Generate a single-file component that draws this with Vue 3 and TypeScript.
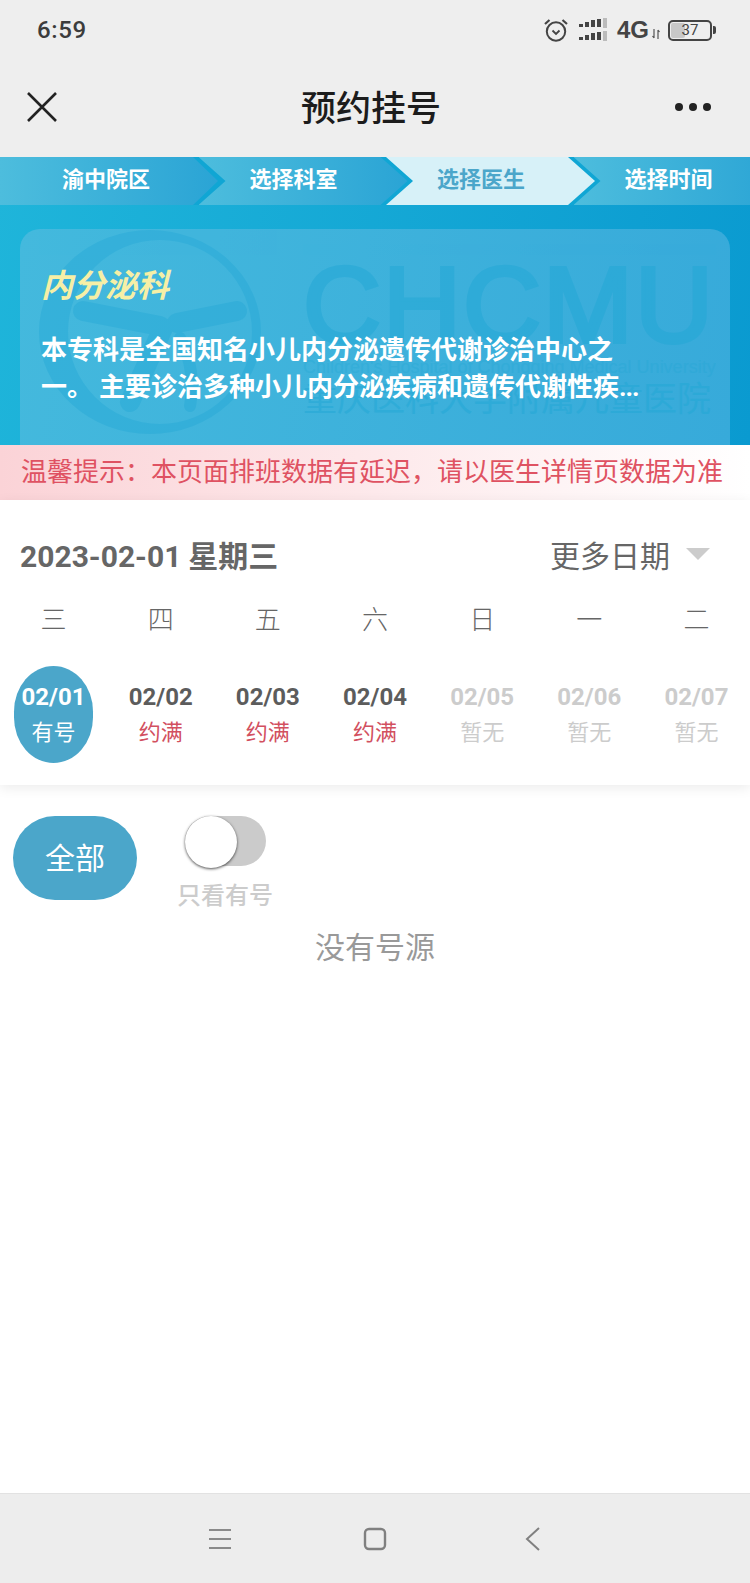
<script setup lang="ts">
interface Day { week: string; date: string; status: string; kind: 'active' | 'full' | 'none' }
const steps: string[] = ['渝中院区', '选择科室', '选择医生', '选择时间']
const days: Day[] = [
  { week: '三', date: '02/01', status: '有号', kind: 'active' },
  { week: '四', date: '02/02', status: '约满', kind: 'full' },
  { week: '五', date: '02/03', status: '约满', kind: 'full' },
  { week: '六', date: '02/04', status: '约满', kind: 'full' },
  { week: '日', date: '02/05', status: '暂无', kind: 'none' },
  { week: '一', date: '02/06', status: '暂无', kind: 'none' },
  { week: '二', date: '02/07', status: '暂无', kind: 'none' }
]
</script>

<template>
  <div class="page">
    <header class="top">
      <div class="status">
        <span class="time">6:59</span>
        <div class="status-right">
          <svg class="alarm" width="26" height="26" viewBox="0 0 26 26" fill="none" stroke="#444" stroke-width="2">
            <circle cx="13" cy="14.5" r="9.2" />
            <path d="M9.5 13.5l3.5 3.5 3.5-3.5" stroke-width="1.8" />
            <path d="M2 7l4.5-4M24 7l-4.5-4" stroke-width="2.2" />
          </svg>
          <svg class="signal" width="28" height="24" viewBox="0 0 28 24">
            <g fill="#444">
              <rect x="0" y="6" width="4" height="3" /><rect x="6" y="4" width="4" height="5" /><rect x="12" y="2" width="4" height="7" /><rect x="18" y="1" width="4" height="8" />
              <rect x="0" y="19" width="4" height="3" /><rect x="6" y="17" width="4" height="5" /><rect x="12" y="15" width="4" height="7" /><rect x="18" y="14" width="4" height="8" />
            </g>
            <rect x="24" y="0" width="4" height="10" fill="#bbb" />
            <rect x="24" y="13" width="4" height="10" fill="#bbb" />
          </svg>
          <span class="net">4G</span>
          <svg class="arrows" width="8" height="12" viewBox="0 0 8 12" fill="none" stroke="#555" stroke-width="1.2">
            <path d="M2 1v9M0.5 8l1.5 2M6 11V2M7.5 4L6 2" />
          </svg>
          <div class="battery"><span class="battery-fill"></span><span class="battery-num">37</span></div>
          <span class="battery-tip"></span>
        </div>
      </div>
      <div class="nav">
        <svg width="30" height="30" viewBox="0 0 30 30" fill="none" stroke="#222" stroke-width="2.6">
          <path d="M1 1l28 28M29 1L1 29" />
        </svg>
        <h1 class="title">预约挂号</h1>
        <div class="dots"><i></i><i></i><i></i></div>
      </div>
    </header>

    <section class="hero">
      <div class="steps">
        <div v-for="(s, i) in steps" :key="s" class="step" :class="{ first: i === 0, current: i === 2 }">{{ s }}</div>
      </div>
      <div class="card">
        <svg class="mark" width="250" height="216" viewBox="0 0 250 216" fill="none">
          <path fill="#24a8d6" fill-rule="evenodd" d="M130 0a111 102 0 1 0 0 204a111 102 0 1 0 0-204zM140 10a92 92 0 1 1 0 184a92 92 0 1 1 0-184z" />
          <g stroke="#24a8d6" stroke-width="20" stroke-linecap="round">
            <path d="M63 81L140 96M217 81L157 93M143 98L110 172" />
            <path d="M160 108C172 130 174 155 170 176" stroke-width="12" />
          </g>
        </svg>
        <div class="wm">
          <div class="wm-big">CHCMU</div>
          <div class="wm-en">Children's Hospital of Chongqing Medical University</div>
          <div class="wm-cn">重庆医科大学附属儿童医院</div>
        </div>
        <h2 class="dept">内分泌科</h2>
        <p class="desc">本专科是全国知名小儿内分泌遗传代谢诊治中心之</p>
        <p class="desc">一。 主要诊治多种小儿内分泌疾病和遗传代谢性疾<span class="ell">...</span></p>
      </div>
    </section>

    <div class="notice">温馨提示：本页面排班数据有延迟，请以医生详情页数据为准</div>

    <section class="calendar">
      <div class="cal-head">
        <span class="cur-date"><b class="digits">2023-02-01</b> 星期三</span>
        <span class="more">更多日期<i class="tri"></i></span>
      </div>
      <div class="weeks">
        <div v-for="d in days" :key="d.week" class="week">{{ d.week }}</div>
      </div>
      <div class="days">
        <div v-for="d in days" :key="d.date" class="day" :class="d.kind">
          <span class="d-date">{{ d.date }}</span>
          <span class="d-status">{{ d.status }}</span>
        </div>
      </div>
    </section>

    <main class="content">
      <div class="filter">
        <button class="all">全部</button>
        <div class="only">
          <div class="switch"><span class="knob"></span></div>
          <span class="only-label">只看有号</span>
        </div>
      </div>
      <p class="empty">没有号源</p>
    </main>

    <footer class="bottom">
      <svg width="24" height="22" viewBox="0 0 24 22" fill="none" stroke="#8a8a8a" stroke-width="2"><path d="M1 2h22M1 11h22M1 20h22" /></svg>
      <svg width="24" height="24" viewBox="0 0 24 24" fill="none" stroke="#808080" stroke-width="2.4"><rect x="2" y="2" width="20" height="20" rx="4" /></svg>
      <svg width="16" height="24" viewBox="0 0 16 24" fill="none" stroke="#808080" stroke-width="2"><path d="M14 1L2 12l12 11" /></svg>
    </footer>
  </div>
</template>

<style>
html, body { margin: 0; background: #fff; }
</style>

<style scoped>
* { box-sizing: border-box; }
.page {
  width: 750px; height: 1583px; display: flex; flex-direction: column; overflow: hidden;
  font-family: "Noto Sans CJK SC", "Noto Sans", sans-serif; background: #fff;
}
.top { height: 157px; background: #eee; display: flex; flex-direction: column; }
.status { height: 60px; display: flex; align-items: center; justify-content: space-between; padding: 0 34px 0 37px; }
.time { font: 500 24px Roboto, sans-serif; letter-spacing: 0.6px; color: #3c3c3c; }
.status-right { display: flex; align-items: center; }
.alarm { margin-right: 10px; }
.signal { margin-right: 10px; }
.net { font: 700 24px "Liberation Sans", sans-serif; color: #444; margin-right: 3px; }
.arrows { margin: 8px 8px 0 0; }
.battery { position: relative; width: 44px; height: 21px; border: 2.5px solid #444; border-radius: 5px; }
.battery-fill { position: absolute; left: 1px; top: 1px; bottom: 1px; width: 14px; background: #c8c8c8; border-radius: 2px; }
.battery-num { position: absolute; inset: 0; text-align: center; font: 400 15px/16px Roboto, sans-serif; color: #444; }
.battery-tip { width: 3px; height: 8px; background: #444; margin-left: 1px; border-radius: 0 2px 2px 0; }
.nav { flex: 1; display: flex; align-items: center; justify-content: space-between; padding: 0 39px 3px 27px; position: relative; }
.title { position: absolute; left: -8px; right: 0; top: 23px; text-align: center; margin: 0; font-size: 35px; line-height: 46px; font-weight: 500; color: #1c1c1c; }
.dots { display: flex; gap: 6px; }
.dots i { width: 8px; height: 8px; border-radius: 50%; background: #222; }

.hero { height: 288px; background: linear-gradient(100deg, #1fb5da, #0a9ad0); overflow: hidden; display: flex; flex-direction: column; }
.steps { height: 48px; display: flex; flex: none; background: #10a6d4; overflow: hidden; }
.step {
  flex: none; width: 209px; margin-left: -21.5px; height: 48px; padding: 0 19px 9px 0;
  display: flex; align-items: center; justify-content: center;
  font-size: 22px; font-weight: 700; color: #fff;
  background: linear-gradient(90deg, #4dbddd, #2aa4d5);
  clip-path: polygon(0 0, 182px 0, 100% 50%, 182px 100%, 0 100%, 27px 50%);
}
.step.first { width: 218px; margin-left: 0; padding: 0 6px 9px 0; clip-path: polygon(0 0, 193px 0, 100% 50%, 193px 100%, 0 100%); }
.step.first + .step { margin-left: -19.5px; }
.step.current { background: #d7f1f8; color: #4ba6ca; }
.card {
  position: relative; margin: 24px 20px 0; flex: 1; padding: 33px 20px 0 21px; overflow: hidden;
  border-radius: 20px 20px 0 0; background: linear-gradient(100deg, #44b9dd, #37aada);
}
.mark { position: absolute; left: 0; top: 1px; opacity: 0.42; }
.wm { position: absolute; left: 283px; top: 0; width: 410px; color: rgb(36, 168, 214); opacity: 0.55; }
.wm-big { font: 400 108px/88px "Liberation Sans", sans-serif; margin-top: 32px; letter-spacing: 2px; white-space: nowrap; -webkit-text-stroke: 4px rgb(36, 168, 214); }
.wm-en { font: 400 18px/22px "Liberation Sans", sans-serif; text-align: right; margin-top: 7px; white-space: nowrap; opacity: 0.6; }
.wm-cn { font-size: 34px; line-height: 40px; white-space: nowrap; margin-top: -1px; }
.dept { position: relative; margin: 0 0 25px; font-size: 32px; line-height: 42px; font-weight: 700; font-style: italic; color: #f6efa6; }
.desc { position: relative; margin: 0; font-size: 26px; line-height: 37px; font-weight: 700; color: #fff; white-space: nowrap; }
.ell { font-family: Roboto, sans-serif; letter-spacing: -1px; }

.notice {
  height: 55px; flex: none; padding: 0 0 7px 21px; display: flex; align-items: center;
  font-size: 26px; white-space: nowrap; color: #df5262;
  background: linear-gradient(90deg, #fbd3d7, #fff);
}
.calendar { height: 285px; flex: none; background: #fff; box-shadow: 0 3px 12px rgba(0, 0, 0, 0.08); position: relative; padding-top: 32px; }
.cal-head { height: 44px; padding: 0 40px 0 20px; display: flex; align-items: center; justify-content: space-between; }
.cur-date { font-size: 30px; font-weight: 700; color: #666; }
.digits { font-family: Roboto, sans-serif; font-weight: 700; }
.more { font-size: 30px; color: #666; display: flex; align-items: center; }
.tri { width: 0; height: 0; margin-left: 16px; border-left: 12px solid transparent; border-right: 12px solid transparent; border-top: 12px solid #ccc; }
.weeks { display: flex; margin-top: 24px; }
.week { flex: 1; text-align: center; font-size: 26px; line-height: 36px; color: #666; font-weight: 300; }
.days { display: flex; margin-top: 30px; }
.day { flex: 1; display: flex; flex-direction: column; align-items: center; height: 97px; position: relative; color: #ccc; padding-top: 15px; }
.day.active::before { content: ""; position: absolute; left: 14px; width: 79px; top: 0; height: 97px; border-radius: 40px / 46px; background: #4ba6ca; }
.d-date { position: relative; font: 700 24px/32px Roboto, sans-serif; }
.d-status { position: relative; font-size: 22px; line-height: 32px; margin-top: 1px; }
.day.active { color: #fff; }
.day.full .d-date { color: #5c5c5c; }
.day.full .d-status { color: #d2505f; }

.content { flex: 1; min-height: 0; }
.filter { display: flex; padding: 31px 0 0 13px; }
.all { width: 124px; height: 84px; border: 0; padding: 0 0 4px; border-radius: 42px; background: #4ba6ca; color: #fff; font: 400 30px "Noto Sans CJK SC", sans-serif; }
.only { margin-left: 41px; display: flex; flex-direction: column; align-items: center; width: 94px; }
.switch { width: 81px; height: 50px; border-radius: 25px; background: #cbcbcb; position: relative; }
.knob { position: absolute; left: 0; top: 0; width: 52px; height: 52px; border-radius: 50%; background: #fff; box-shadow: 0 1px 3px rgba(0, 0, 0, 0.7); }
.only-label { font-size: 24px; line-height: 34px; font-weight: 500; color: #ccc; margin-top: 11px; white-space: nowrap; }
.empty { margin: 10px 0 0; text-align: center; font-size: 30px; line-height: 48px; color: #999; }

.bottom { height: 90px; flex: none; background: #ededed; border-top: 1px solid #e2e2e2; position: relative; }
.bottom svg { position: absolute; top: 33px; }
.bottom svg:nth-child(1) { left: 208px; top: 34px; }
.bottom svg:nth-child(2) { left: 363px; }
.bottom svg:nth-child(3) { left: 525px; }
</style>
